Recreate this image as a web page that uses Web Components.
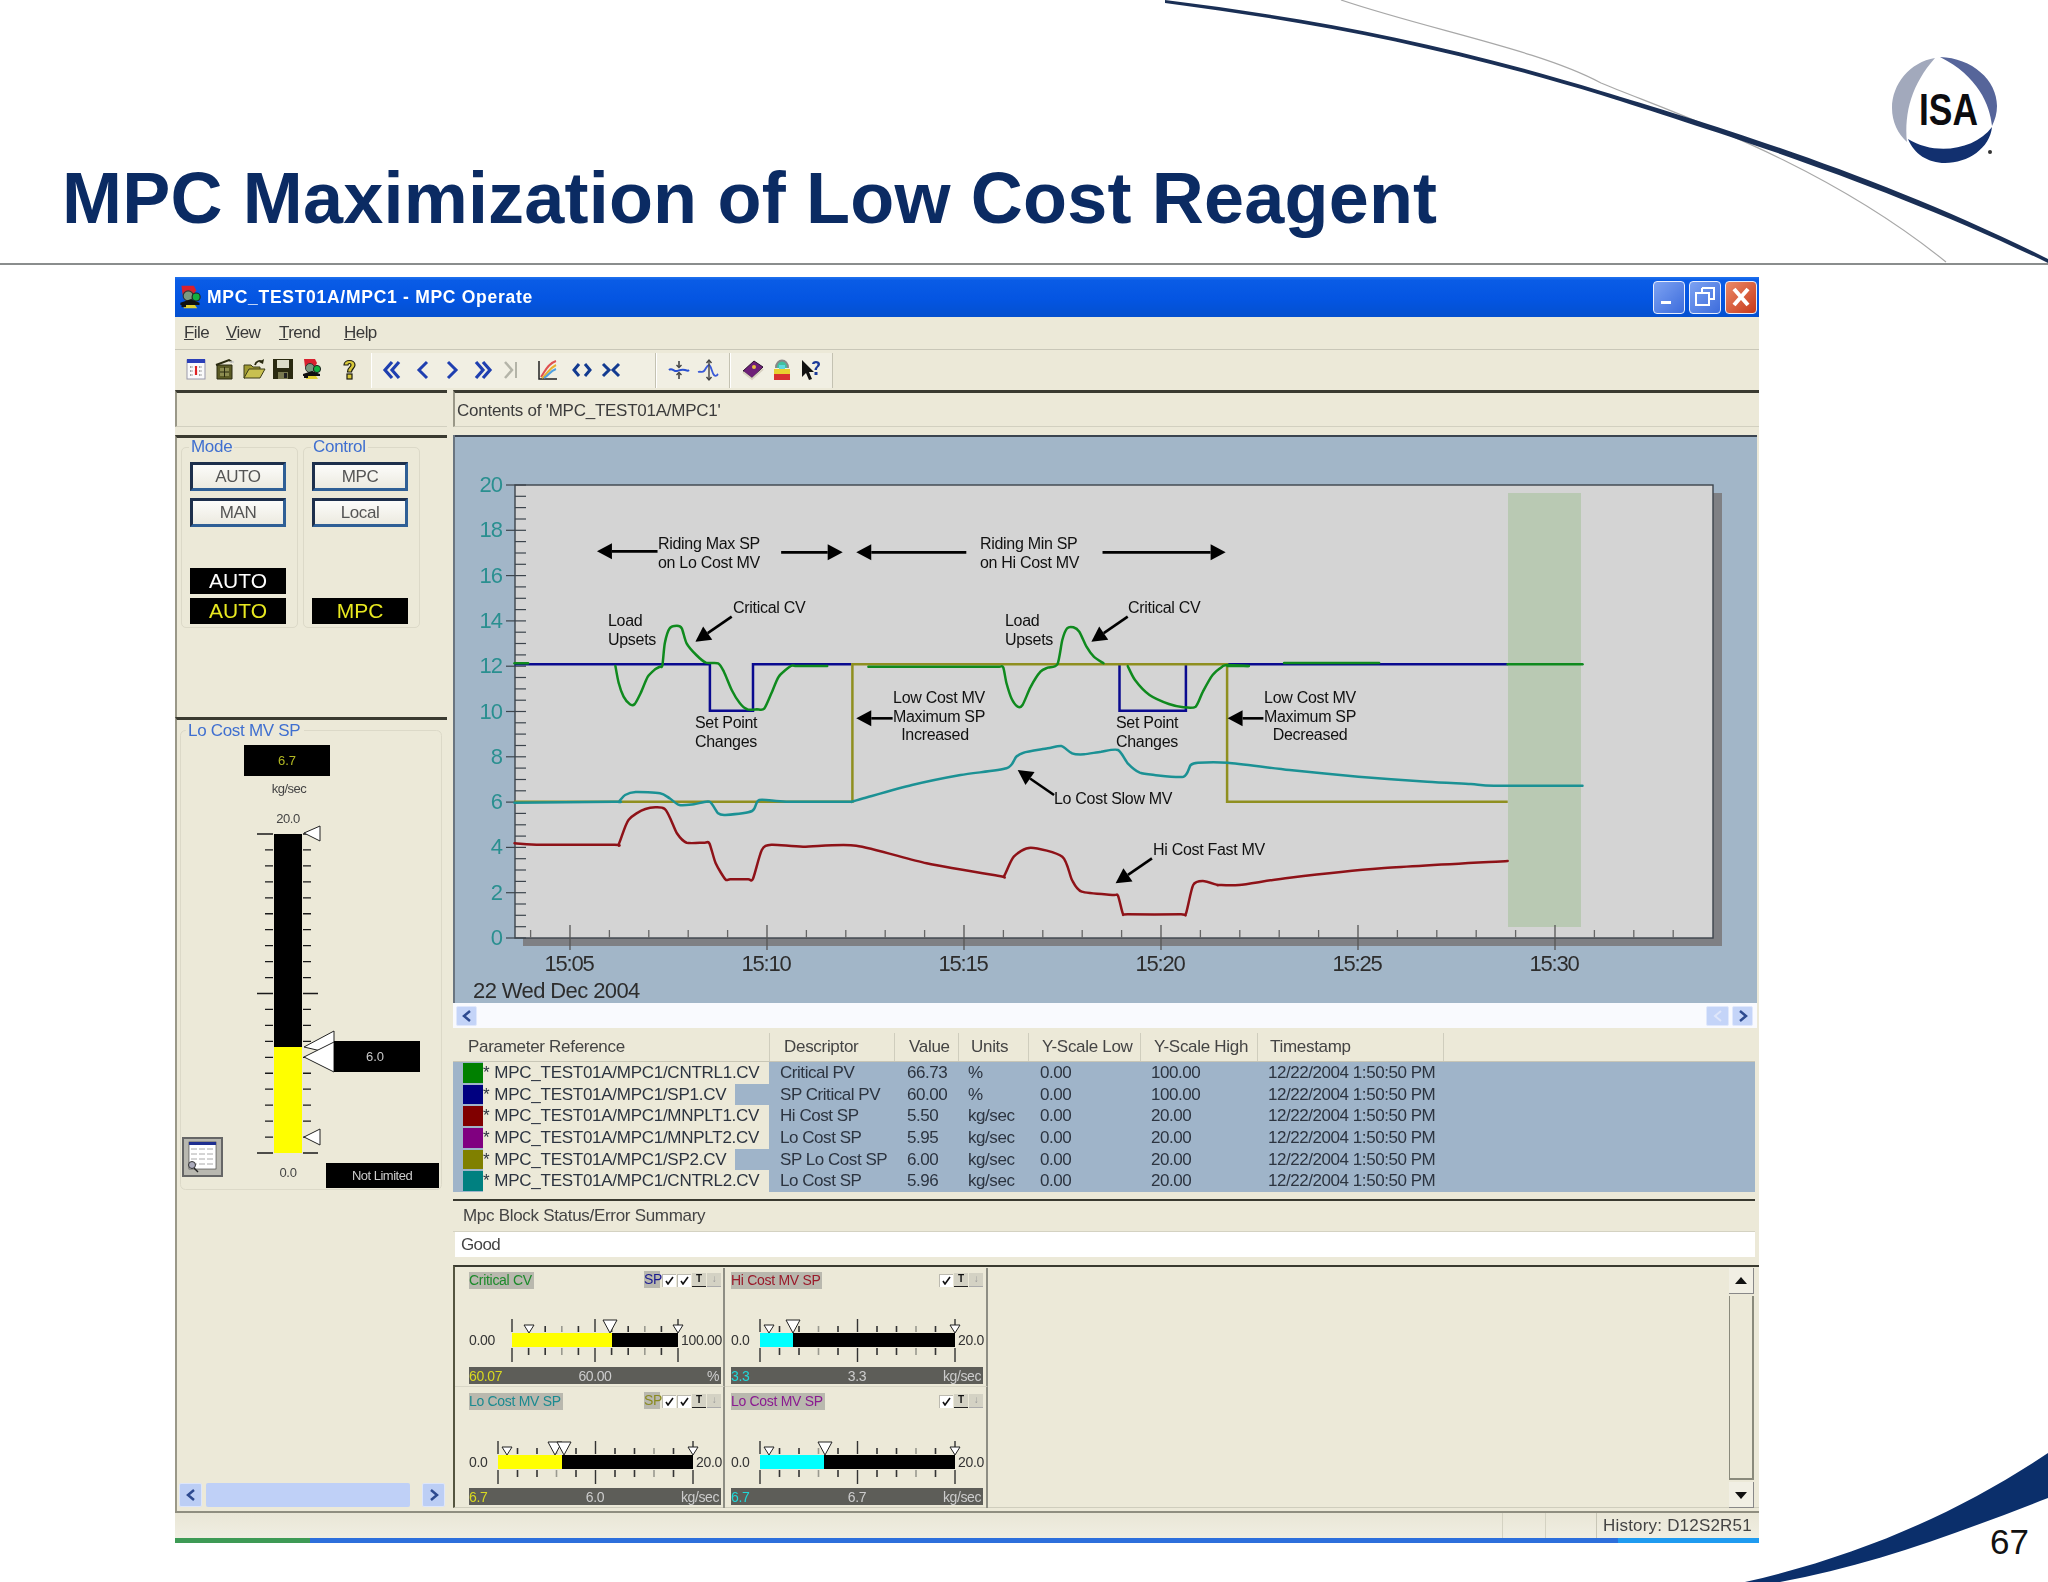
<!DOCTYPE html>
<html><head><meta charset="utf-8"><title>MPC Maximization of Low Cost Reagent</title>
<style>html,body{margin:0;padding:0;background:#fff}</style></head>
<body>
<isa-slide page="67" heading="MPC Maximization of Low Cost Reagent">
  <xp-window heading="MPC_TEST01A/MPC1 - MPC Operate">
    <mpc-layout>
      <sunken-box slot="top-left"></sunken-box>
      <sunken-box slot="top-right">Contents of 'MPC_TEST01A/MPC1'</sunken-box>
      <mode-panel slot="mode"></mode-panel>
      <sp-gauge slot="gauge"></sp-gauge>
      <trend-chart slot="trend"></trend-chart>
      <trend-scroll slot="scroll"></trend-scroll>
      <param-table slot="table"></param-table>
      <status-summary slot="status"></status-summary>
      <mini-grid slot="mini"></mini-grid>
    </mpc-layout>
    <win-status slot="footer"></win-status>
  </xp-window>
</isa-slide>
<script>
const FONT='"Liberation Sans",Arial,Helvetica,sans-serif';
const def=(name,css,html)=>customElements.define(name,class extends HTMLElement{
  connectedCallback(){ if(this.shadowRoot) return;
    const s=this.attachShadow({mode:'open'});
    s.innerHTML='<style>'+css+'</style>'+(typeof html==='function'?html(this):html);
  }});
const tri=(pts,fill='#fff',stroke='#222',sw=1)=>`<polygon points="${pts}" fill="${fill}" stroke="${stroke}" stroke-width="${sw}"/>`;

/* ---------- slide ---------- */
def('isa-slide',`
:host{display:block;position:relative;width:2048px;height:1582px;background:#fff;overflow:hidden;font-family:${FONT}}
.deco{position:absolute;left:0;top:0}
h1{position:relative;margin:0;box-sizing:border-box;height:263px;padding:158px 0 0 62px;font:700 72px/80px ${FONT};letter-spacing:.2px;color:#0b2b63;white-space:nowrap}
.rule{position:relative;height:2px;background:#8a8d8d}
.win{position:relative;margin:12px 0 0 175px;width:1584px}
.num{position:absolute;left:1990px;top:1522px;font:35px/40px ${FONT};color:#111}
`,h=>`
<svg class="deco" width="2048" height="1582" viewBox="0 0 2048 1582">
  <path d="M1341,0 C1430,30 1540,50 1601,83 C1670,112 1820,160 1946,262" fill="none" stroke="#a8a8a8" stroke-width="1.2"/>
  <path d="M1165,0 C1310,18 1440,42 1601,91 C1710,124 1880,175 2048,259 L2048,263 C1880,182 1710,130 1601,95 C1440,46 1310,22 1165,3 Z" fill="#1a2f55"/>
  <path d="M1745,1582 C1860,1556 1960,1512 2048,1453 L2048,1498 C1960,1532 1870,1566 1780,1582 Z" fill="#0b2f6b"/>
  <g>
    <path d="M1935,58 C1910,62 1892,84 1892,108 C1892,122 1898,134 1907,142 C1904,112 1912,84 1935,58 Z" fill="#a2a9bc"/>
    <path d="M1940,57 C1972,58 1997,80 1997,106 C1997,113 1995,120 1992,126 C1990,105 1978,76 1940,57 Z" fill="#56659a"/>
    <path d="M1908,139 C1935,156 1975,150 1992,127 C1990,148 1968,163 1945,163 C1928,163 1914,154 1908,139 Z" fill="#12306f"/>
    <circle cx="1990" cy="152" r="2" fill="#333"/>
    <text x="1919" y="125" font-family="Liberation Sans" font-weight="700" font-size="45" textLength="59" lengthAdjust="spacingAndGlyphs" fill="#0c0c10">ISA</text>
  </g>
</svg>
<h1>${h.getAttribute('heading')}</h1>
<div class="rule"></div>
<div class="win"><slot></slot></div>
<div class="num">${h.getAttribute('page')}</div>`);

/* ---------- window ---------- */
const I={
 cal:`<rect x="3" y="3" width="18" height="19" fill="#fafafa" stroke="#99a"/><rect x="3" y="2" width="18" height="4" fill="#2b3fb8"/><path d="M6 10h3M6 14h3M6 18h3M15 10h3M15 14h3M15 18h3" stroke="#8a8a8a" stroke-width="1.4" stroke-dasharray="1.5 1"/><path d="M12 9v2M11 12h2M12 13v5" stroke="#d22" stroke-width="2.2"/>`,
 bin:`<path d="M4 8h15v14H4z" fill="#5a5a24" stroke="#2a2a10"/><path d="M3 8l13-5 3 2" fill="none" stroke="#2a2a10" stroke-width="2"/><path d="M7 11h9v8H7z" fill="#8c8c50"/><path d="M11.5 10v10M7 15h9" stroke="#2a2a10"/><path d="M17 5h4" stroke="#ccc" stroke-width="1.5"/>`,
 folder:`<path d="M2 8h7l2 2h7v3H7L3 21H2z" fill="#a09a30" stroke="#3c3c18"/><path d="M7 12h16l-5 9H2z" fill="#c8c050" stroke="#3c3c18"/><path d="M13 8c1-4 5-5 7-3" fill="none" stroke="#2a2a10" stroke-width="1.8"/><path d="M22 2l-1 5-4-2z" fill="#2a2a10"/>`,
 save:`<path d="M2 2h20v20H2z" fill="#2a2a10"/><path d="M6 3h12v8H6z" fill="#dcdcc8"/><path d="M7 15h10v7H7z" fill="#7a7a50"/><path d="M13 16h3v5h-3z" fill="#222"/>`,
 robot:`<path d="M4 2h11l2 4-2 4H5z" fill="#d8202e"/><circle cx="10" cy="11" r="4.5" fill="#7a9a80" stroke="#333"/><circle cx="17" cy="12" r="3.6" fill="#12b040" stroke="#222"/><path d="M3 17l9-3 8 3v2H3z" fill="#111"/><path d="M6 19h10l2 3H6z" fill="#e0d030"/><path d="M4 20h4" stroke="#111" stroke-width="2"/>`,
 help:`<path d="M7 8c0-6 11-6 11 0 0 3-3.5 4-3.5 7h-4c0-5 3.5-4.500 3.500-7 0-2-3-2-3 0z" fill="#d8c83a" stroke="#1c1c10" stroke-width="1.2"/><rect x="10" y="17" width="5" height="5" fill="#d8c83a" stroke="#1c1c10" stroke-width="1.2"/>`,
 ll:`<path d="M10 4l-7 8 7 8M17 4l-7 8 7 8" fill="none" stroke="#1f3fb0" stroke-width="3.2"/>`,
 l:`<path d="M16 4l-8 8 8 8" fill="none" stroke="#1f3fb0" stroke-width="3"/>`,
 r:`<path d="M8 4l8 8-8 8" fill="none" stroke="#1f3fb0" stroke-width="3"/>`,
 rr:`<path d="M7 4l7 8-7 8M14 4l7 8-7 8" fill="none" stroke="#1f3fb0" stroke-width="3.2"/>`,
 end:`<path d="M7 4l7 8-7 8" fill="none" stroke="#b4b4a8" stroke-width="2.5"/><path d="M18 4v16" stroke="#b4b4a8" stroke-width="2"/>`,
 chart:`<path d="M4 3v18h18" fill="none" stroke="#222" stroke-width="1.5"/><path d="M6 19C10 14 12 6 21 3" fill="none" stroke="#e05050" stroke-width="2"/><path d="M7 20c5-3 6-9 14-13" fill="none" stroke="#e8b030" stroke-width="2"/><path d="M9 20c5-3 6-7 12-9" fill="none" stroke="#50a0e0" stroke-width="2"/>`,
 out:`<path d="M9 6l-5 6 5 6M15 6l5 6-5 6" fill="none" stroke="#123a90" stroke-width="3"/>`,
 inw:`<path d="M4 6l6 6-6 6M20 6l-6 6 6 6" fill="none" stroke="#123a90" stroke-width="3"/>`,
 z1:`<path d="M2 12c3-3 5 2 8 1s5-2 8-1 3 1 4 0" fill="none" stroke="#2a50d0" stroke-width="2"/><path d="M12 3v6M12 15v6" stroke="#444" stroke-width="1.6"/><path d="M9.500 7l2.500 2.500L14.500 7M9.500 17l2.500-2.500 2.500 2.500" fill="none" stroke="#444" stroke-width="1.4"/>`,
 z2:`<path d="M2 14c3-1 4 1 6-1s3-6 5-6 3 8 5 10 3 0 4-1" fill="none" stroke="#3a5ad8" stroke-width="1.8"/><path d="M13 2v20" stroke="#444" stroke-width="1.4"/><path d="M10.500 5l2.500-3 2.500 3M10.500 19l2.500 3 2.500-3" fill="none" stroke="#444" stroke-width="1.4"/>`,
 book:`<path d="M2 13L13 3l9 6-11 11z" fill="#6e1f78" stroke="#2a1030"/><circle cx="13" cy="9" r="2" fill="#e8c040"/><path d="M2 14l9 7 11-10" fill="none" stroke="#d8d0c0" stroke-width="2"/>`,
 lock:`<path d="M6 10c0-10 12-10 12 0" fill="#40c0a0" stroke="#888" stroke-width="2"/><path d="M9 7h6v4H9z" fill="#60d8e0"/><rect x="4" y="11" width="16" height="5" fill="#e8d030"/><rect x="4" y="16" width="16" height="6" fill="#d83030"/>`,
 what:`<path d="M3 2v17l4-4 3 7 3-1-3-7h5z" fill="#111"/><path d="M13 6c0-4 8-4 8 0 0 3-3 3-3 6h-2.500c0-3 3-3.500 3-6 0-1-3-1-3 0zM15.500 14h3v3h-3z" fill="#1a3a9a"/>`
};
const ic=k=>`<svg width="24" height="24" viewBox="0 0 24 24">${I[k]}</svg>`;
def('xp-window',`
:host{display:flex;flex-direction:column;width:1584px;height:1266px;background:#ece9d8;font-family:${FONT};color:#333;filter:blur(.35px)}
.tb{height:40px;display:flex;align-items:center;background:linear-gradient(#1f72ee 0,#0a5ce6 8%,#0455e2 55%,#0450cf 100%);color:#fff;font:700 17.5px ${FONT};letter-spacing:.72px;white-space:nowrap}
.tb svg.app{margin:0 3px 0 2px}
.btns{margin-left:auto;display:flex;gap:4px;margin-right:2px}
.b{width:32px;height:33px;border:1px solid #e8eefc;border-radius:4px;box-sizing:border-box;background:linear-gradient(135deg,#7da2f2,#3c6cdc);display:flex;align-items:center;justify-content:center}
.b.x{background:linear-gradient(135deg,#ea8a68,#c8381a)}
.menu{height:32px;display:flex;align-items:center;padding-left:9px;gap:0;font-size:17px;letter-spacing:-.55px;border-bottom:1px solid #c9c7b8;color:#3a3a3a}
.menu span:nth-child(1){width:42px}.menu span:nth-child(2){width:53px}.menu span:nth-child(3){width:65px}
.tools{height:38px;display:flex;align-items:center;background:#ece9d8}
.t{position:relative;display:flex;align-items:center;height:100%}
.t svg{flex:none}
.grp{height:35px;margin-top:2px;background:#f1efe3;border-right:1px solid #c4c2b2;border-left:1px solid #fff;box-sizing:border-box;display:flex;align-items:center}
::slotted(*){flex:none}
.main{flex:1;min-height:0}
`,h=>`
<div class="tb"><svg class="app" width="27" height="32" viewBox="0 0 24 24">${I.robot}</svg><span>${h.getAttribute('heading')}</span>
 <div class="btns">
  <div class="b"><svg width="20" height="20"><rect x="2" y="14" width="10" height="3" fill="#fff"/></svg></div>
  <div class="b"><svg width="24" height="24"><path d="M9 3h12v11h-4M9 3v4" fill="none" stroke="#fff" stroke-width="2"/><path d="M3 8h13v12H3z" fill="none" stroke="#fff" stroke-width="2"/></svg></div>
  <div class="b x"><svg width="24" height="24"><path d="M5 4l14 16M19 4L5 20" stroke="#fff" stroke-width="4"/></svg></div>
 </div></div>
<div class="menu"><span><u>F</u>ile</span><span><u>V</u>iew</span><span><u>T</u>rend</span><span><u>H</u>elp</span></div>
<div class="tools">
  <div class="t" style="width:196px;padding-left:9px;box-sizing:border-box;gap:5px">${['cal','bin','folder','save','robot'].map(ic).join('')}<span style="width:3px"></span>${ic('help')}</div>
  <div class="grp" style="width:285px;padding-left:10px;gap:5px">${['ll','l','r','rr','end'].map(ic).join('')}<span style="width:3px"></span>${ic('chart')}<span style="width:1px"></span>${ic('out')}${ic('inw')}</div>
  <div class="grp" style="width:74px;padding-left:10px;gap:5px">${ic('z1')}${ic('z2')}</div>
  <div class="grp" style="width:103px;padding-left:10px;gap:5px">${ic('book')}${ic('lock')}${ic('what')}</div>
</div>
<div class="main"><slot></slot></div>
<slot name="footer"></slot>`);

def('mpc-layout',`
:host{display:block;height:100%}
.g{display:grid;grid-template-columns:272px 1fr;column-gap:6px;padding-top:2px}
.top{height:37px}
.col{display:flex;flex-direction:column;height:1076px;margin-top:8px}
.r{margin-top:8px;height:1076px;display:flex;flex-direction:column;width:1306px}
`,`<div class="g">
  <div class="top"><slot name="top-left"></slot></div><div class="top"><slot name="top-right"></slot></div>
  <div class="col"><slot name="mode"></slot><slot name="gauge"></slot></div>
  <div class="r"><slot name="trend"></slot><slot name="scroll"></slot><slot name="table"></slot><slot name="status"></slot><slot name="mini"></slot></div>
</div>`);

def('sunken-box',`
:host{display:flex;align-items:center;box-sizing:border-box;height:37px;border-top:3px solid #3a3a30;border-left:2px solid #9a9888;border-bottom:1px solid #d2d0c0;padding:3px 0 0 2px;font-size:17px;letter-spacing:-.25px;color:#3c3c3c;white-space:nowrap}
`,`<slot></slot>`);

/* ---------- mode panel ---------- */
def('mode-panel',`
:host{display:flex;box-sizing:border-box;height:282px;border-top:3px solid #3a3a30;border-left:2px solid #9a9888;padding:9px 0 0 4px;gap:5px;font-family:${FONT}}
.gp{position:relative;box-sizing:border-box;width:117px;height:181px;border:1px solid #dcd9c8;border-radius:5px;display:flex;flex-direction:column;padding:14px 0 0 8px}
.lab{position:absolute;left:7px;top:-10px;padding:0 2px;background:#ece9d8;color:#3f6fd0;font-size:17px;line-height:18px;letter-spacing:-.3px}
.bt{box-sizing:border-box;width:96px;height:29px;margin-bottom:7px;border:3px solid;border-color:#1d2f4c #2f5f96 #2f5f96 #1d2f4c;background:linear-gradient(#fcfcfa,#eceae0);display:flex;align-items:center;justify-content:center;font-size:17px;letter-spacing:-.4px;color:#555}
.k{box-sizing:border-box;width:96px;height:26px;background:#000;color:#fff;display:flex;align-items:center;justify-content:center;font-size:21px}
.y{color:#e8e820}
`,`<div class="gp"><div class="lab">Mode</div><div class="bt">AUTO</div><div class="bt">MAN</div>
 <div class="k" style="margin-top:34px;margin-bottom:4px">AUTO</div><div class="k y">AUTO</div></div>
<div class="gp"><div class="lab">Control</div><div class="bt">MPC</div><div class="bt">Local</div>
 <div class="k y" style="margin-top:64px">MPC</div></div>`);

/* ---------- gauge ---------- */
def('sp-gauge',`
:host{display:flex;flex-direction:column;flex:1;box-sizing:border-box;height:794px;border-top:3px solid #3a3a30;border-left:2px solid #9a9888;font-family:${FONT}}
svg{display:block;flex:none}
.sb{margin-top:auto;margin-bottom:4px;display:flex;height:24px;padding-left:2px}
.a{width:23px;height:24px;box-sizing:border-box;background:#bccef5;border:1px solid #dde6fb;border-radius:2px;display:flex;align-items:center;justify-content:center}
.th{width:204px;height:24px;margin:0 12px 0 4px;background:#bfd0f7;border-radius:2px}
`,()=>{
 const y=i=>834+i*15.95; let ticks='';
 for(let i=0;i<=20;i++){const mj=i%10===0;
  ticks+=`<path d="M${mj?257:265} ${y(i)}H273M303 ${y(i)}H${mj?318:311}" stroke="#1a1a1a" stroke-width="1.3"/>`;}
 return `<svg width="270" height="475" viewBox="177 720 270 475" font-family="Liberation Sans">
  <rect x="180.5" y="730.5" width="261" height="459" rx="5" fill="none" stroke="#dcd9c8"/>
  <rect x="186" y="721" width="118" height="18" fill="#ece9d8"/>
  <text x="188" y="736" font-size="17" fill="#3f6fd0" letter-spacing="-.3">Lo Cost MV SP</text>
  <rect x="244" y="745" width="86" height="31" fill="#000"/>
  <text x="287" y="765" font-size="13" text-anchor="middle" fill="#b2b822">6.7</text>
  <text x="289" y="793" font-size="13" text-anchor="middle" fill="#444" letter-spacing="-.5">kg/sec</text>
  <text x="288" y="823" font-size="13" text-anchor="middle" fill="#444" letter-spacing="-.4">20.0</text>
  ${ticks}
  <rect x="274" y="834" width="28" height="213" fill="#000"/><rect x="274" y="1047" width="28" height="106" fill="#ff0"/>
  ${tri('304,833 320,826 320,841')}${tri('304,1137 320,1129 320,1145')}
  ${tri('304,1047 334,1031 334,1054')}${tri('304,1057 334,1042 334,1072')}
  <rect x="334" y="1041" width="86" height="31" fill="#000"/>
  <text x="375" y="1061" font-size="13" text-anchor="middle" fill="#c8c8c8">6.0</text>
  <text x="288" y="1177" font-size="13" text-anchor="middle" fill="#444" letter-spacing="-.3">0.0</text>
  <rect x="326" y="1163" width="113" height="25" fill="#000"/>
  <text x="382" y="1180" font-size="13" text-anchor="middle" fill="#ccc" letter-spacing="-.5">Not Limited</text>
  <rect x="183" y="1138" width="39" height="38" fill="#b9b8b0" stroke="#666" stroke-width="2"/>
  <rect x="189" y="1142" width="27" height="27" fill="#fff" stroke="#333" stroke-width=".6"/>
  <rect x="189" y="1142" width="27" height="3" fill="#1f2f90"/>
  <path d="M191 1149h23M191 1154h23M191 1159h23M191 1164h23" stroke="#aaa" stroke-dasharray="6 2"/>
  <circle cx="192" cy="1165" r="3.5" fill="#aab" stroke="#333"/><path d="M194 1168l4 4" stroke="#222" stroke-width="1.5"/>
 </svg>
 <div class="sb"><div class="a"><svg width="12" height="14"><path d="M9 2L3 7l6 5" fill="none" stroke="#2d4a90" stroke-width="2.5"/></svg></div><div class="th"></div><div class="a"><svg width="12" height="14"><path d="M3 2l6 5-6 5" fill="none" stroke="#2d4a90" stroke-width="2.5"/></svg></div></div>`;
});

/* ---------- trend chart ---------- */
def('trend-chart',`
:host{display:block;height:568px;width:1304px;background:#a2b6c8;box-sizing:border-box}
svg{display:block}
`,()=>{
 const z6=p=>p.map(([x,y])=>[500+x/2.063,480+y/3]);
 const z7=p=>p.map(([x,y])=>[1060+x/2.178,480+y/3]);
 const d=a=>a.map(([x,y],i)=>(i?'L':'M')+x.toFixed(1)+' '+y.toFixed(1)).join('');
 const cr=a=>{let s='M'+a[0][0].toFixed(1)+' '+a[0][1].toFixed(1);
   for(let i=0;i<a.length-1;i++){const p0=a[Math.max(0,i-1)],p1=a[i],p2=a[i+1],p3=a[Math.min(a.length-1,i+2)],k=1/8;
     s+='C'+[p1[0]+(p2[0]-p0[0])*k,p1[1]+(p2[1]-p0[1])*k,p2[0]-(p3[0]-p1[0])*k,p2[1]-(p3[1]-p1[1])*k,p2[0],p2[1]].map(v=>v.toFixed(1)).join(' ');}
   return s;};
 const pl=(a,c,w=2.5)=>`<path d="${d(a)}" fill="none" stroke="${c}" stroke-width="${w}" stroke-linejoin="miter"/>`;
 const sm=(a,c,w=2.5)=>`<path d="${cr(a)}" fill="none" stroke="${c}" stroke-width="${w}" stroke-linecap="round"/>`;
 const arrow=(a,b,hl=15,hw=8)=>{ const [x1,y1]=a,[x2,y2]=b; const L=Math.hypot(x2-x1,y2-y1),ux=(x2-x1)/L,uy=(y2-y1)/L;
   const bx=x2-ux*hl,by=y2-uy*hl; const nx=-uy*hw,ny=ux*hw;
   return `<path d="M${x1} ${y1}L${bx} ${by}" stroke="#000" stroke-width="2.6"/><polygon points="${x2},${y2} ${bx+nx},${by+ny} ${bx-nx},${by-ny}" fill="#000"/>`;};
 const ar6=(x1,y1,x2,y2)=>{const [a,b]=z6([[x1,y1],[x2,y2]]);return arrow(a,b);};
 const ar7=(x1,y1,x2,y2)=>{const [a,b]=z7([[x1,y1],[x2,y2]]);return arrow(a,b);};
 const label=(x,yc,t,a)=>`<text x="${x}" y="${yc+5.5}" ${a?'text-anchor="middle"':''}>${t}</text>`;
 let ax='';
 for(let i=0;i<=40;i++){const y=485+i*11.325;const mj=i%4===0;
   ax+=`<path d="M${mj?506:515} ${y.toFixed(1)}H526" stroke="#3c444c" stroke-width="1.2"/>`;
   if(mj){const v=20-i/2;ax+=`<text x="502" y="${(y+7).toFixed(1)}" text-anchor="end" font-size="22" letter-spacing="-1" fill="#2a8f90">${v}</text>`;}
 }
 for(let k=-1;k<=28;k++){const x=570+39.4*k;const mj=(k%5===0);
   ax+=`<path d="M${x.toFixed(1)} ${mj?925:930}V${mj?950:938}" stroke="${mj?'#555':'#666'}" stroke-width="1.3"/>`;
   if(mj&&k<=25){const m=5+k; ax+=`<text x="${(x-1).toFixed(1)}" y="971" text-anchor="middle" font-size="22" letter-spacing="-1.2" fill="#2d2d2d">15:${String(m).padStart(2,'0')}</text>`;}
 }
 const blue1=z6([[30,553],[433,553],[433,692],[522,692],[522,553],[725,553]]);
 const blue2=z6([[1278,553],[1278,692],[1415,692],[1415,553]]);
 const blue3=z6([[1500,553],[1568,553]]).concat(z7([[975,553]]));
 const olive=z6([[30,965],[727,965],[727,553],[1500,553],[1500,965]]).concat(z7([[975,965]]));
 const g='#0f8a1e';
 const g1=z6([[30,550],[58,550]]);
 const g2=z6([[238,558],[245,610],[255,650],[268,673],[278,672],[290,640],[305,590],[320,568],[330,560],[335,556],[340,490],[350,445],[365,437],[375,445],[385,490],[405,525],[425,548],[450,550],[462,575],[478,630],[495,670],[510,688],[530,688],[545,686],[560,640],[575,590],[600,558],[610,558],[625,558],[675,558]]);
 const g3=z6([[760,560],[1000,560],[1030,560],[1038,562],[1045,610],[1055,655],[1068,680],[1078,675],[1095,620],[1115,575],[1130,563],[1150,553],[1160,480],[1170,445],[1183,442],[1195,455],[1210,500],[1225,530],[1245,550]]);
 const g4=z6([[1295,558],[1310,600],[1340,645],[1380,672],[1410,682],[1435,680],[1450,635],[1470,585],[1490,560],[1500,555],[1545,558]]);
 const g5=z7([[365,558],[410,558]]),g6=z7([[488,549],[695,549]]),g7=z7([[975,553],[1138,553]]);
 const teal=z6([[30,968],[235,965],[245,965],[258,945],[280,936],[330,940],[350,955],[370,975],[400,973],[432,965],[450,1000],[465,1005],[520,993],[535,960],[590,965],[715,965],[725,965],[750,955],[850,915],[950,885],[1045,865],[1065,830],[1080,818],[1130,805],[1158,798],[1180,820],[1205,823],[1240,815],[1275,810],[1295,850],[1320,878],[1350,885],[1410,890],[1425,855],[1440,848]]).concat(z7([[365,848],[500,870],[650,890],[800,905],[895,912],[945,917],[1138,917]]));
 const red=z6([[30,1090],[75,1094],[235,1094],[245,1092],[265,1020],[300,987],[340,987],[365,1060],[385,1088],[422,1088],[432,1090],[445,1150],[465,1198],[475,1198],[512,1198],[522,1196],[540,1110],[560,1094],[625,1100],[735,1097],[880,1150],[1030,1188],[1040,1188],[1060,1130],[1095,1103],[1160,1130],[1180,1200],[1200,1235],[1265,1245],[1275,1247],[1285,1301],[1295,1303],[1405,1303],[1415,1301],[1430,1215],[1450,1203],[1480,1215]]).concat(z7([[345,1215],[390,1215],[500,1193],[700,1165],[975,1143]]));
 return `<svg width="1304" height="568" viewBox="453 435 1304 568" font-family="Liberation Sans">
  <rect x="453" y="435" width="1304" height="2" fill="#3a4450"/><rect x="453" y="435" width="2" height="568" fill="#6a7580"/>
  <rect x="523" y="493" width="1199" height="453" fill="#7f8084"/>
  <rect x="515" y="485" width="1198" height="453" fill="#d4d4d4" stroke="#3c444c" stroke-width="1.4"/>
  <rect x="1508" y="493" width="73" height="434" fill="#b9c9b3"/>
  ${ax}
  <text x="473" y="998" font-size="22" letter-spacing="-.6" fill="#2d2d2d">22 Wed Dec 2004</text>
  ${pl(blue1,'#0a0a8f')}${pl(blue2,'#0a0a8f')}${pl(blue3,'#0a0a8f')}
  ${pl(olive,'#8f8f20')}
  ${[g1,g2,g3,g4,g5,g6,g7].map(a=>sm(a,g)).join('')}
  ${sm(teal,'#1b9194')}${sm(red,'#8e1218')}
  <g font-size="16" letter-spacing="-.3" fill="#111">
   ${label(658,543,'Riding Max SP')}${label(658,562,'on Lo Cost MV')}
   ${label(980,543,'Riding Min SP')}${label(980,562,'on Hi Cost MV')}
   ${label(733,607,'Critical CV')}${label(1128,607,'Critical CV')}
   ${label(608,620,'Load')}${label(608,639,'Upsets')}${label(1005,620,'Load')}${label(1005,639,'Upsets')}
   ${label(695,722,'Set Point')}${label(695,741,'Changes')}${label(1116,722,'Set Point')}${label(1116,741,'Changes')}
   ${label(939,697,'Low Cost MV',1)}${label(939,716,'Maximum SP',1)}${label(935,734,'Increased',1)}
   ${label(1310,697,'Low Cost MV',1)}${label(1310,716,'Maximum SP',1)}${label(1310,734,'Decreased',1)}
   ${label(1054,798,'Lo Cost Slow MV')}${label(1153,849,'Hi Cost Fast MV')}
  </g>
  ${ar6(325,214,200,214)}${ar6(580,217,707,217)}${ar6(962,217,735,217)}${ar6(1243,217,1497,217)}
  ${ar6(478,410,403,485)}${ar6(1295,410,1220,485)}${ar6(810,715,735,715)}${ar7(443,715,365,715)}
  ${ar6(1143,945,1068,870)}${ar6(1345,1135,1270,1210)}
 </svg>`;
});

def('trend-scroll',`
:host{display:flex;align-items:center;height:25px;width:1304px;background:#f9fafe;box-sizing:border-box;padding-left:3px}
.a{width:21px;height:20px;background:#c4d4f8;border:1px solid #e0e8fc;border-radius:2px;box-sizing:border-box;display:flex;align-items:center;justify-content:center}
.s{flex:1}
`,`<div class="a"><svg width="12" height="14"><path d="M9 2L3 7l6 5" fill="none" stroke="#2d4a90" stroke-width="2.5"/></svg></div><div class="s"></div>
<div class="a" style="width:23px;margin-right:3px"><svg width="12" height="14"><path d="M9 2L3 7l6 5" fill="none" stroke="#dfe6fa" stroke-width="2"/></svg></div><div class="a" style="margin-right:4px"><svg width="12" height="14"><path d="M3 2l6 5-6 5" fill="none" stroke="#2d4a90" stroke-width="2.5"/></svg></div>`);

/* ---------- parameter table ---------- */
def('param-table',`
:host{display:block;margin-top:5px;width:1302px;height:159px;font:17px ${FONT};color:#2c3440;white-space:nowrap}
.h{display:flex;height:29px;background:#ece9d8;box-sizing:border-box;border-bottom:1px solid #c8c6b6;letter-spacing:-.3px;color:#444}
.h span{box-sizing:border-box;display:flex;align-items:center;border-right:1px solid #cfcdbd;height:100%}
.rows{display:grid;grid-template-columns:10px 20px 286px 127px 61px 72px 111px 117px 1fr;grid-auto-rows:21.67px;background:#9fb4c9;height:130px;letter-spacing:-.45px;line-height:21.67px}
.sw{margin:1px 0}
.n{background:#ece9d8;letter-spacing:-.27px}
.n b{font-weight:400;margin-left:5px}
.n.short{margin-right:34px}
.rows div:not(.sw):not(.n){padding-left:11px;overflow:hidden}
`,()=>{
 const rows=[['#008000','MPC_TEST01A/MPC1/CNTRL1.CV','Critical PV','66.73','%','0.00','100.00'],
 ['#000080','MPC_TEST01A/MPC1/SP1.CV','SP Critical PV','60.00','%','0.00','100.00',1],
 ['#800000','MPC_TEST01A/MPC1/MNPLT1.CV','Hi Cost SP','5.50','kg/sec','0.00','20.00'],
 ['#800080','MPC_TEST01A/MPC1/MNPLT2.CV','Lo Cost SP','5.95','kg/sec','0.00','20.00'],
 ['#808000','MPC_TEST01A/MPC1/SP2.CV','SP Lo Cost SP','6.00','kg/sec','0.00','20.00',1],
 ['#008080','MPC_TEST01A/MPC1/CNTRL2.CV','Lo Cost SP','5.96','kg/sec','0.00','20.00']];
 const H=[['Parameter Reference',317,15],['Descriptor',125,14],['Value',64,14],['Units',70,12],['Y-Scale Low',112,13],['Y-Scale High',117,13],['Timestamp',186,12]];
 return `<div class="h">${H.map(([t,w,p])=>`<span style="width:${w}px;padding-left:${p}px">${t}</span>`).join('')}</div>
 <div class="rows">${rows.map(r=>`<div></div><div class="sw" style="background:${r[0]}"></div><div class="n${r[7]?' short':''}">*<b>${r[1]}</b></div><div>${r[2]}</div><div>${r[3]}</div><div>${r[4]}</div><div>${r[5]}</div><div>${r[6]}</div><div>12/22/2004 1:50:50 PM</div>`).join('')}</div>`;
});

def('status-summary',`
:host{display:block;margin-top:7px;height:58px;width:1302px;box-sizing:border-box;border-top:2px solid #3a3a30;font:17px ${FONT};color:#444;letter-spacing:-.3px;white-space:nowrap}
.a{height:30px;display:flex;align-items:center;padding-left:10px;border-bottom:1px solid #d4d2c2}
.b{height:25px;display:flex;align-items:center;padding-left:6px;background:#fff;margin-left:2px;letter-spacing:-.6px}
`,`<div class="a">Mpc Block Status/Error Summary</div><div class="b">Good</div>`);

/* ---------- mini faceplates ---------- */
def('mini-card',`
:host{display:block;box-sizing:border-box;font:14px ${FONT};color:#333;white-space:nowrap;position:relative;letter-spacing:-.3px}
.t{display:flex;align-items:flex-start;height:17px}
.nm{background:#b9b8ae;padding:0 2px 0 0;height:17px;line-height:17px}
.ctl{margin-left:auto;display:flex;align-items:center;gap:1px;height:14px;margin-top:1px}
.sp{background:#b9b8ae;height:17px;line-height:17px;margin-top:-1px;width:16px;text-align:center;margin-right:1px;display:block}
.c{width:14px;height:13px;background:#fff;border:1px solid #bcbab0;border-width:1px 0 0 1px;box-sizing:border-box;display:flex;align-items:center;justify-content:center}
.m{width:14px;height:13px;background:#d4d2c4;border-bottom:1px solid #222;color:#111;font:700 10px ${FONT};text-align:center;line-height:12px}
.m.off{color:#999;border-bottom:1px solid #aaa}
.sc{display:flex;align-items:flex-start}
.sc span{display:block;line-height:16px;margin-top:13px;flex:none}
.sc svg{flex:none;display:block;overflow:visible}
.f{display:grid;grid-template-columns:1fr auto 1fr;align-items:center;height:17px;background:#5d5d58;color:#ccc;letter-spacing:-.4px}
.f i{font-style:normal;text-align:right;padding-right:2px}
`,h=>{
 const A=n=>h.getAttribute(n), W=+A('w'), F=+A('fill'), row2=A('row')==='2';
 let tk='';
 for(let i=0;i<=10;i++){const x=(i*W/10).toFixed(1),mj=i%5===0,col=(i==3||i==8)?'#9a9a90':'#333';
   tk+=`<path d="M${x} ${mj?0:7}V13M${x} 29V${mj?43:36}" stroke="${mj?'#333':col}" stroke-width="${mj?1.4:1.6}"/>`;}
 const mk=(x,big)=>{const w=big?7:5,t=big?1:6;return tri(`${x-w},${t} ${x+w},${t} ${x},14`);};
 const marks=(A('marks')||'').split(',').map(s=>{const m=s.trim();return m.endsWith('b')?mk(+m.slice(0,-1),1):mk(+m,0)}).join('');
 const chk=`<div class="c"><svg width="9" height="9"><path d="M1 5l2 3 5-7" fill="none" stroke="#111" stroke-width="1.6"/></svg></div>`;
 return `<div style="padding-top:${row2?6:4}px">
  <div class="t"><span class="nm" style="color:${A('color')}">${A('name')}</span>
   <div class="ctl">${A('sp')?`<span class="sp" style="color:${A('sp')}">SP</span>${chk}`:''}${chk}<div class="m">T</div><div class="m off">↓</div></div></div>
  <div class="sc" style="margin-top:${row2?31:30}px"><span style="width:${A('lw')}px">${A('lo')}</span>
   <svg width="${W}" height="44">${tk}<rect x="0" y="14" width="${W}" height="14" fill="#000"/><rect x="0" y="14" width="${F}" height="14" fill="${A('barc')}"/>${marks}</svg>
   <span style="margin-left:3px">${A('hi')}</span></div>
  <div class="f" style="margin-top:${row2?3:4}px"><span style="color:${A('valc')}">${A('val')}</span><span>${A('sv')}</span><i>${A('unit')}</i></div>
 </div>`;
});
def('mini-grid',`
:host{display:flex;margin-top:8px;height:243px;width:1306px;box-sizing:border-box;border-top:2px solid #3a3a30;border-left:2px solid #555540;border-bottom:1px solid #cfcdbd}
.g{display:grid;grid-template-columns:270px 263px;grid-template-rows:119px 121px;margin-top:1px}
.cell{box-sizing:border-box;border-right:2px solid #8e8e84;}
.c1{padding:0 2px 0 14px}.c2{padding:0 3px 0 6px}
.r1{border-bottom:1px solid #d8d6c6}
.vs{margin:0 5px 0 auto;width:25px;display:flex;flex-direction:column;height:240px;margin-top:1px}
.u{height:26px;box-sizing:border-box;background:#f1efe4;border-right:1px solid #888;border-bottom:1px solid #888;display:flex;align-items:center;justify-content:center}
.tr{flex:1;margin:2px 0;box-sizing:border-box;border-left:1px solid #8a8a7c;border-right:2px solid #8a8a7c;border-bottom:2px solid #8a8a7c;background:#ece9d8}
`,()=>{
 const card=(cls,attrs)=>`<div class="cell ${cls}"><mini-card ${attrs}></mini-card></div>`;
 return `<div class="g">
 ${card('c1 r1','name="Critical CV" color="#1c8a2a" sp="#1a1a90" lo="0.00" hi="100.00" lw="43" w="166" fill="100" barc="#ffff00" marks="17,98b,166" val="60.07" valc="#d8d820" sv="60.00" unit="%"')}
 ${card('c2 r1','name="Hi Cost MV SP" color="#9a1a2a" lo="0.0" hi="20.0" lw="29" w="195" fill="33" barc="#00ffff" marks="9,33b,195" val="3.3" valc="#20d8d8" sv="3.3" unit="kg/sec"')}
 ${card('c1','row="2" name="Lo Cost MV SP" color="#1a8a90" sp="#8a8a20" lo="0.0" hi="20.0" lw="29" w="195" fill="64" barc="#ffff00" marks="9,57b,66b,195" val="6.7" valc="#d8d820" sv="6.0" unit="kg/sec"')}
 ${card('c2','row="2" name="Lo Cost MV SP" color="#8a1a90" lo="0.0" hi="20.0" lw="29" w="195" fill="64" barc="#00ffff" marks="9,65b,195" val="6.7" valc="#20d8d8" sv="6.7" unit="kg/sec"')}
 </div>
 <div class="vs"><div class="u"><svg width="14" height="10"><path d="M1 8h12L7 1z" fill="#111"/></svg></div><div class="tr"></div><div class="u"><svg width="14" height="10"><path d="M1 2h12L7 9z" fill="#111"/></svg></div></div>`;
});

/* ---------- status bar ---------- */
def('win-status',`
:host{display:block;font:17px ${FONT};color:#444}
.s{display:flex;justify-content:flex-end;align-items:center;height:27px;box-sizing:border-box;border-top:2px solid #8f8e80;background:linear-gradient(#e9e6d6,#f0eee2);letter-spacing:.2px;white-space:nowrap}
.c{height:100%;border-left:1px solid #d4d2c2;box-sizing:border-box}
.h{height:100%;display:flex;align-items:center;width:163px;padding-left:6px;box-sizing:border-box;border-left:1px solid #c8c6b6}
.st{display:flex;height:5px}
`,`<div class="s"><div class="c" style="width:43px"></div><div class="c" style="width:51px"></div><div class="h">History: D12S2R51</div></div>
<div class="st"><div style="width:135px;background:#3e9a55"></div><div style="width:1308px;background:#2d6fdc"></div><div style="flex:1;background:#1f9bf0"></div></div>`);
</script>
</body></html>
